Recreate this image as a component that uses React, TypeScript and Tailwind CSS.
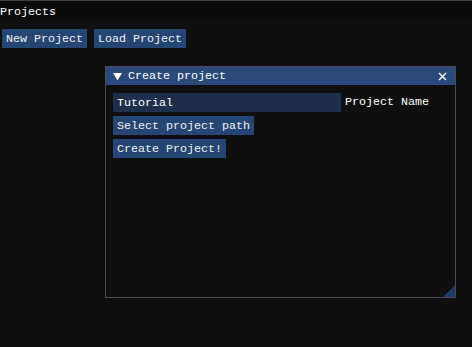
import React from "react";

const font = { fontFamily: '"Liberation Mono", "DejaVu Sans Mono", monospace' };

function Btn({ children }: { children: React.ReactNode }) {
  return (
    <div className="h-[19px] px-[4px] bg-[#254674] text-[#f0f0f0] leading-[20px] whitespace-pre">
      {children}
    </div>
  );
}

export default function App() {
  return (
    <div
      className="relative w-[472px] h-[347px] bg-[#0f0f0f] text-[11.67px] text-white overflow-hidden"
      style={font}
    >
      {/* main window title */}
      <div className="h-[21px] bg-[#0a0a0a] border-t border-[#3c3c44] leading-[22px] whitespace-pre">
        Projects
      </div>

      <div className="flex gap-[7px] pl-[2px] pt-[8px]">
        <Btn>New Project</Btn>
        <Btn>Load Project</Btn>
      </div>

      {/* floating window */}
      <div className="absolute left-[105px] top-[66px] w-[351px] h-[232px] border border-[#4a4a52] bg-[#0f0f0f] flex flex-col">
        <div className="h-[18px] bg-[#294a7a] flex items-center pl-[7px] pr-[7px]">
          <svg width="9" height="9" viewBox="0 0 9 9" className="mr-[6px]">
            <polygon points="0,1 9,1 4.5,8.5" fill="#ffffff" />
          </svg>
          <span className="leading-[18px] whitespace-pre">Create project</span>
          <svg width="9" height="9" viewBox="0 0 9 9" className="ml-auto mr-[1px]">
            <path d="M1 1 L8 8 M8 1 L1 8" stroke="#ffffff" strokeWidth="1.4" />
          </svg>
        </div>
        <div className="flex flex-col gap-[4px] pl-[7px] pt-[8px]">
          <div className="flex items-center">
            <div className="w-[228px] h-[19px] bg-[#1d2f4a] px-[4px] leading-[20px] whitespace-pre">Tutorial</div>
            <span className="ml-[4px] whitespace-pre">Project Name</span>
          </div>
          <div className="flex">
            <Btn>Select project path</Btn>
          </div>
          <div className="flex">
            <Btn>Create Project!</Btn>
          </div>
        </div>
        <svg width="12" height="12" viewBox="0 0 12 12" className="absolute right-[0px] bottom-[0px]">
          <polygon points="12,0 12,12 0,12" fill="#203a60" />
        </svg>
      </div>
    </div>
  );
}
